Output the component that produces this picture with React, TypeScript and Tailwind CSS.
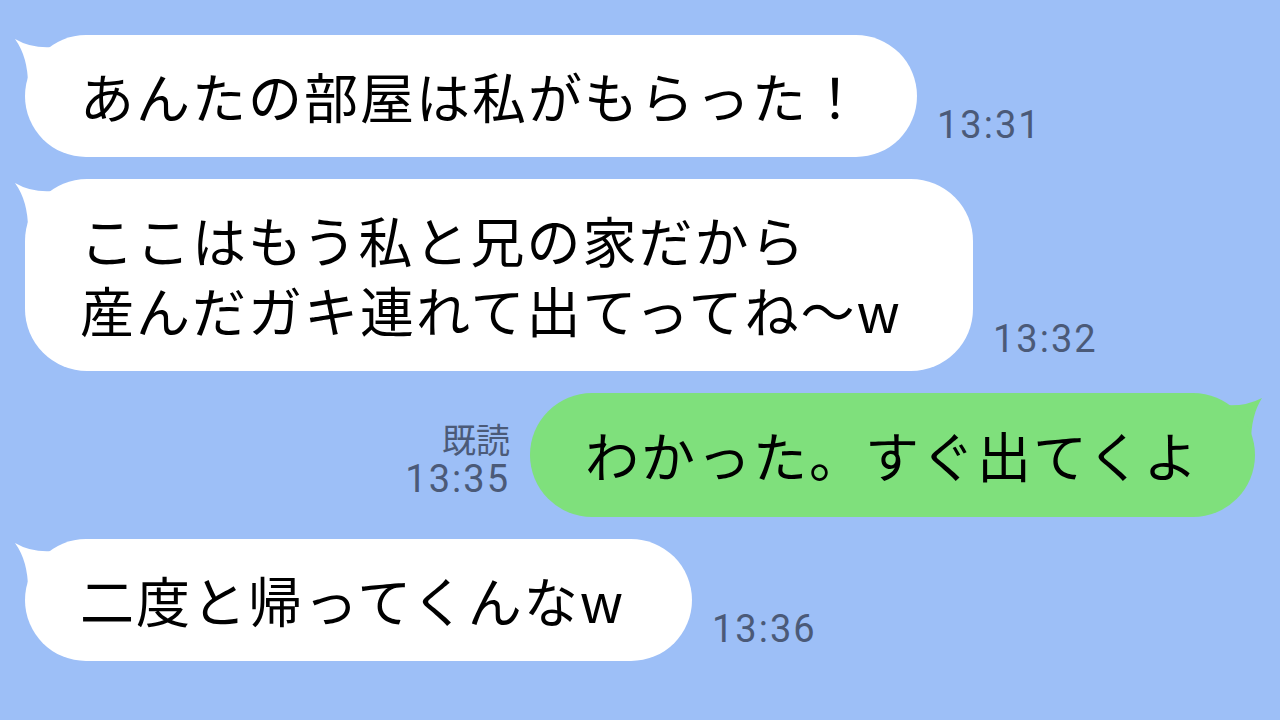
import React from "react";

const jp = { fontFamily: '"Noto Sans CJK JP", "Noto Sans", sans-serif' };
const num = { fontFamily: 'Roboto, "Noto Sans", sans-serif' };

function TailLeft() {
  return (
    <svg className="absolute -left-[11px] top-0" width="60" height="50" viewBox="0 0 60 50">
      <path d="M1 4 Q 18 14 40 12 L 55 12 L 55 50 L 14 50 Q 14 22 1 4 Z" fill="#ffffff" />
    </svg>
  );
}

function TailRight() {
  return (
    <svg className="absolute -right-[8px] top-0" width="60" height="50" viewBox="0 0 60 50">
      <path d="M59 5 Q 42 14 20 12 L 5 12 L 5 50 L 48 50 Q 48 22 59 5 Z" fill="#7fe07c" />
    </svg>
  );
}

function Incoming({ lines, width, time }: { lines: string[]; width: string; time: string }) {
  return (
    <div className="flex items-end">
      <div className={`relative ${width}`}>
        <TailLeft />
        <div className="relative rounded-[62px] bg-white pl-[55px] py-[26px] text-[54px] leading-[70px] tracking-[2px] text-black" style={jp}>
          {lines.map((l) => (
            <div key={l} className="whitespace-nowrap">{l}</div>
          ))}
        </div>
      </div>
      <div className="ml-[20px] mb-[12px] text-[38px] leading-[40px] tracking-[2px] text-[#4b5a78]" style={num}>
        {time}
      </div>
    </div>
  );
}

export default function App() {
  return (
    <div className="w-[1280px] h-[720px] overflow-hidden bg-[#9dbff7] pt-[35px] pl-[25px]">
      <div className="flex flex-col gap-[22px]">
        <Incoming lines={["あんたの部屋は私がもらった！"]} width="w-[892px]" time="13:31" />
        <Incoming
          lines={["ここはもう私と兄の家だから", "産んだガキ連れて出てってね〜w"]}
          width="w-[948px]"
          time="13:32"
        />
        <div className="flex items-end justify-end pr-[25px]">
          <div className="mr-[20px] mb-[18px] flex flex-col items-end text-[#4b5a78]">
            <div className="text-[34px] leading-[40px]" style={jp}>既読</div>
            <div className="text-[38px] leading-[40px] tracking-[2px]" style={num}>13:35</div>
          </div>
          <div className="relative w-[725px]">
            <TailRight />
            <div className="relative rounded-[62px] bg-[#7fe07c] pl-[55px] py-[27px] text-[54px] leading-[70px] tracking-[2px] text-black whitespace-nowrap" style={jp}>
              わかった。すぐ出てくよ
            </div>
          </div>
        </div>
        <Incoming lines={["二度と帰ってくんなw"]} width="w-[667px]" time="13:36" />
      </div>
    </div>
  );
}
